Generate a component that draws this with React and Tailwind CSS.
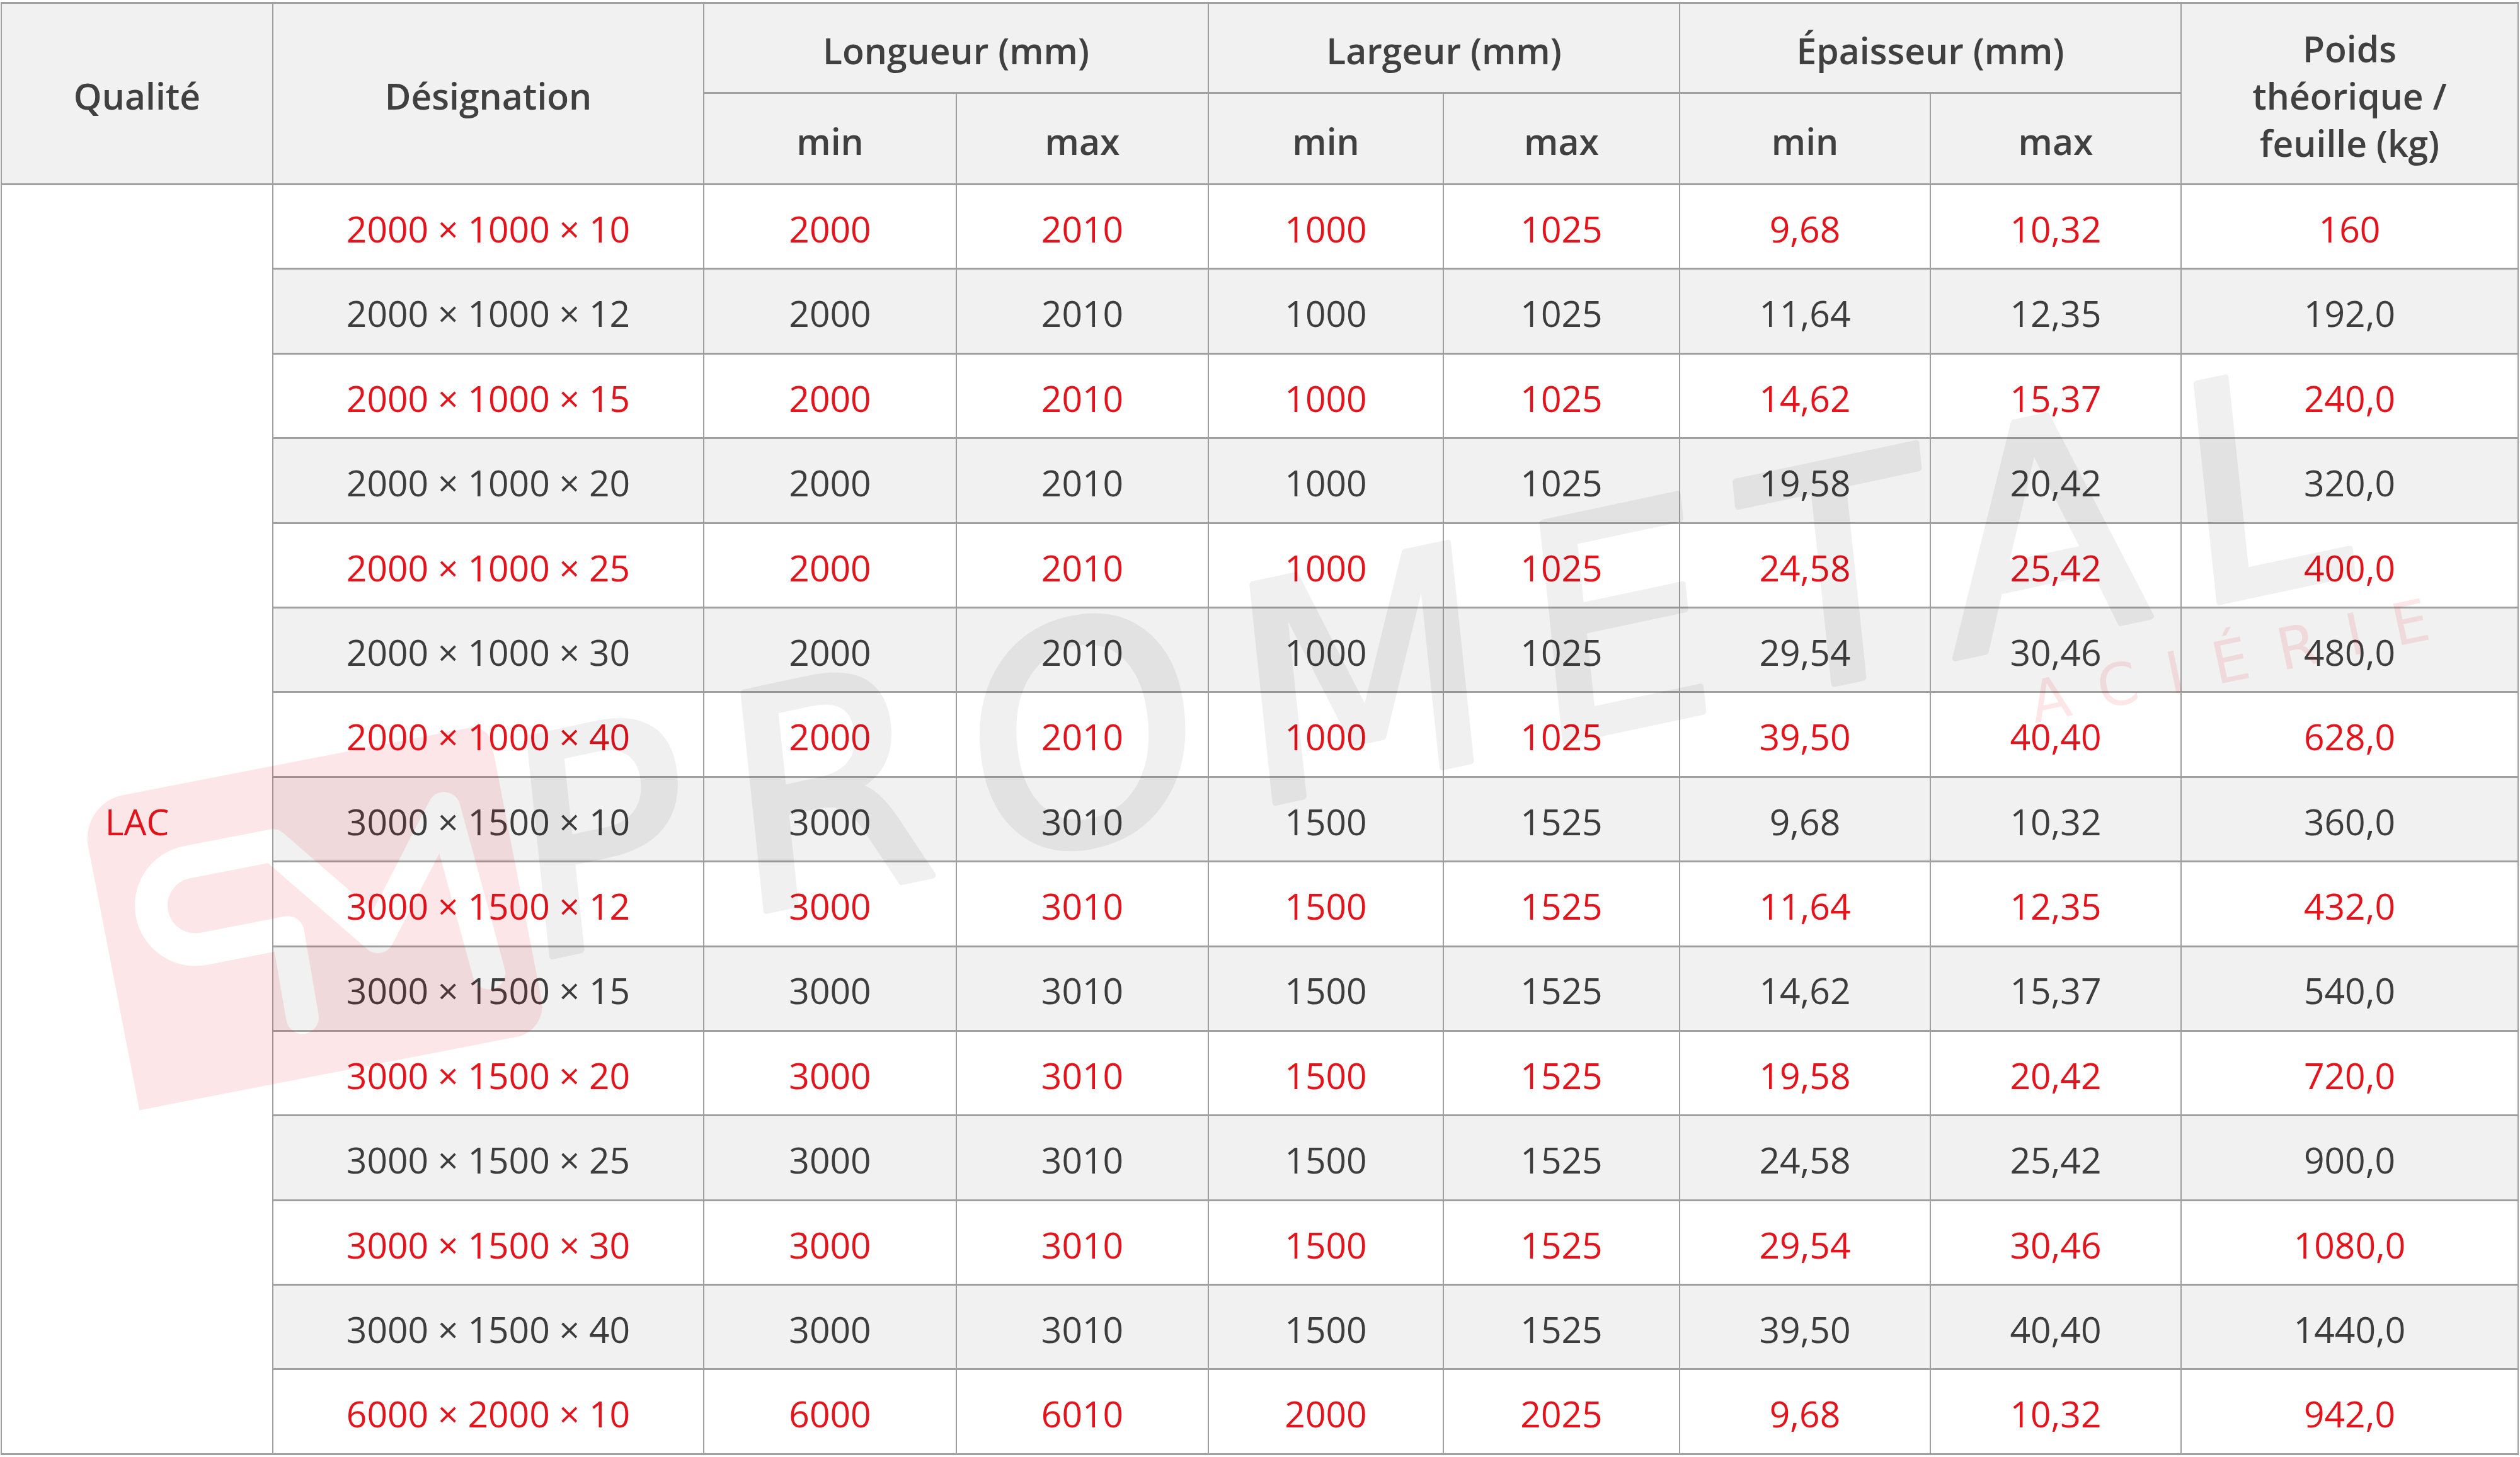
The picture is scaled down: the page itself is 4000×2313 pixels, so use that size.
import React from "react";

const rows = [
  ["2000 × 1000 × 10", "2000", "2010", "1000", "1025", "9,68", "10,32", "160"],
  ["2000 × 1000 × 12", "2000", "2010", "1000", "1025", "11,64", "12,35", "192,0"],
  ["2000 × 1000 × 15", "2000", "2010", "1000", "1025", "14,62", "15,37", "240,0"],
  ["2000 × 1000 × 20", "2000", "2010", "1000", "1025", "19,58", "20,42", "320,0"],
  ["2000 × 1000 × 25", "2000", "2010", "1000", "1025", "24,58", "25,42", "400,0"],
  ["2000 × 1000 × 30", "2000", "2010", "1000", "1025", "29,54", "30,46", "480,0"],
  ["2000 × 1000 × 40", "2000", "2010", "1000", "1025", "39,50", "40,40", "628,0"],
  ["3000 × 1500 × 10", "3000", "3010", "1500", "1525", "9,68", "10,32", "360,0"],
  ["3000 × 1500 × 12", "3000", "3010", "1500", "1525", "11,64", "12,35", "432,0"],
  ["3000 × 1500 × 15", "3000", "3010", "1500", "1525", "14,62", "15,37", "540,0"],
  ["3000 × 1500 × 20", "3000", "3010", "1500", "1525", "19,58", "20,42", "720,0"],
  ["3000 × 1500 × 25", "3000", "3010", "1500", "1525", "24,58", "25,42", "900,0"],
  ["3000 × 1500 × 30", "3000", "3010", "1500", "1525", "29,54", "30,46", "1080,0"],
  ["3000 × 1500 × 40", "3000", "3010", "1500", "1525", "39,50", "40,40", "1440,0"],
  ["6000 × 2000 × 10", "6000", "6010", "2000", "2025", "9,68", "10,32", "942,0"],
];

const cell =
  "flex items-center justify-center text-center pt-[8px] border-r-2 border-b-[3px] border-[#a0a0a0]";
const head = cell + " bg-[#f1f1f1] text-[#404040] font-semibold text-[57px] leading-[75px]";

function Watermark() {
  return (
    <svg
      className="absolute inset-0 pointer-events-none"
      width="4000"
      height="2313"
      viewBox="0 0 4000 2313"
    >
      <defs>
        <mask id="logoMask" maskUnits="userSpaceOnUse" x="-400" y="-320" width="800" height="640">
          <rect x="-400" y="-320" width="800" height="640" fill="white" />
          <path
            d="M -48 153 L -45 16 L -181 16 A 70 70 0 0 1 -181 -124 L -42 -124 L 94 50 L 236 -130 L 256 140"
            fill="none"
            stroke="black"
            strokeWidth="52"
            strokeLinejoin="round"
            strokeLinecap="round"
          />
        </mask>
      </defs>
      <g transform="translate(498 1456) rotate(-11)">
        <path
          d="M -260 -248 H 300 A 30 30 0 0 1 330 -218 V 198 A 50 50 0 0 1 280 248 H -330 V -178 A 70 70 0 0 1 -260 -248 Z"
          fill="#e30613"
          fillOpacity="0.1"
          mask="url(#logoMask)"
        />
      </g>
      <g opacity="0.055">
        <text
          x="985"
          y="1495"
          transform="rotate(-12 985 1495) skewX(-6)"
          fontFamily="'DejaVu Sans', sans-serif"
          fontSize="475"
          textLength="2970"
          lengthAdjust="spacing"
          fill="#000"
          stroke="#000"
          strokeWidth="10"
          strokeLinejoin="round"
        >
          PROMETAL
        </text>
      </g>
      <text
        x="3230"
        y="1148"
        transform="rotate(-12 3230 1148)"
        fontFamily="'DejaVu Sans', sans-serif"
        fontSize="92"
        textLength="645"
        lengthAdjust="spacing"
        fill="#e30613"
        fillOpacity="0.1"
      >
        ACIÉRIE
      </text>
    </svg>
  );
}

export default function App() {
  return (
    <div className="relative w-[4000px] h-[2313px] overflow-hidden bg-white pt-[3px] pl-px font-['Open_Sans',sans-serif]">
      <div className="grid w-[3997px] grid-cols-[431px_684px_401px_400px_373px_375px_398px_398px_535px] grid-rows-[143px_145px_repeat(15,134.4px)] border-t-[3px] border-l-2 border-[#a0a0a0]">
        <div className={head + " row-span-2"}>Qualité</div>
        <div className={head + " row-span-2"}>Désignation</div>
        <div className={head + " col-span-2"}>Longueur (mm)</div>
        <div className={head + " col-span-2"}>Largeur (mm)</div>
        <div className={head + " col-span-2"}>Épaisseur (mm)</div>
        <div className={head + " row-span-2"}>
          Poids
          <br />
          théorique /
          <br />
          feuille (kg)
        </div>
        <div className={head}>min</div>
        <div className={head}>max</div>
        <div className={head}>min</div>
        <div className={head}>max</div>
        <div className={head}>min</div>
        <div className={head}>max</div>

        <div className={cell + " col-start-1 row-start-3 row-span-15 bg-white text-[#e3141c] text-[57px]"}>
          LAC
        </div>
        {rows.map((r, i) =>
          r.map((v, j) => (
            <div
              key={i + "-" + j}
              className={
                cell +
                " text-[57px] " +
                (i % 2 === 0 ? "bg-white text-[#e3141c]" : "bg-[#f1f1f1] text-[#3d3d3d]")
              }
            >
              {v}
            </div>
          ))
        )}
      </div>
      <Watermark />
    </div>
  );
}
